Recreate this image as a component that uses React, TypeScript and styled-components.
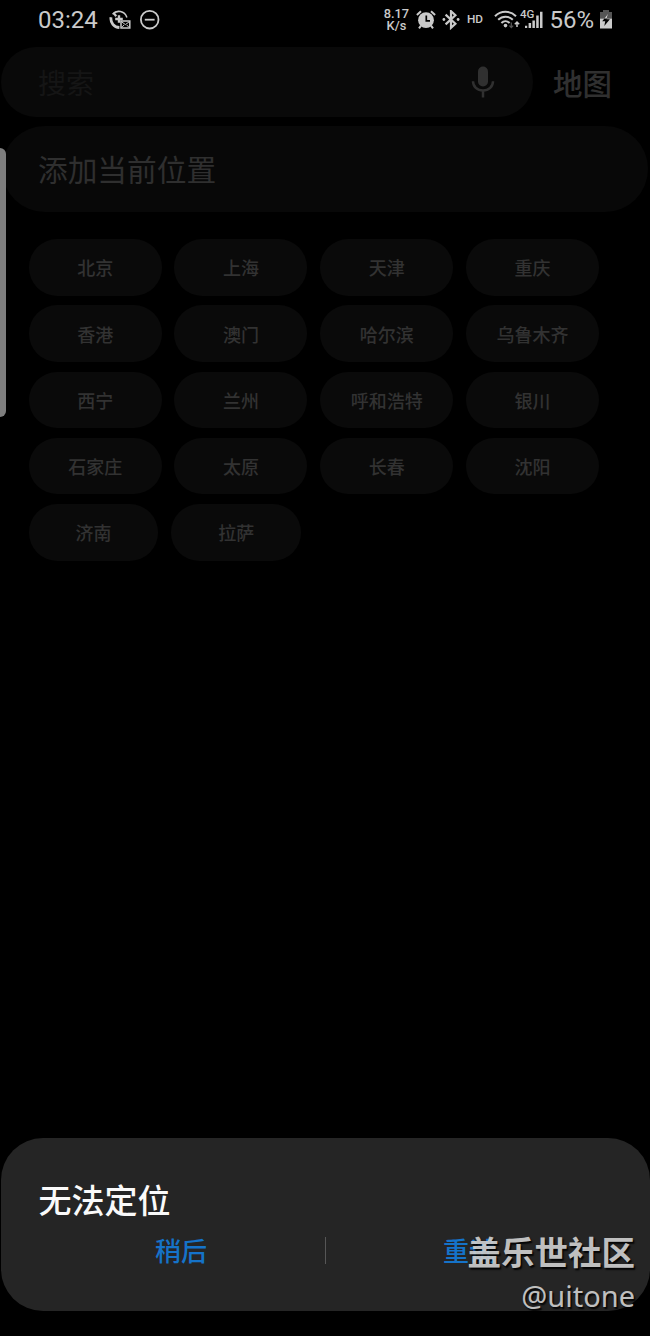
import React from "react";
import styled, { createGlobalStyle } from "styled-components";

const cjk = `"Noto Sans CJK SC", sans-serif`;

const GlobalStyle = createGlobalStyle`
  * { box-sizing: border-box; }
  body { margin: 0; background: #000; }
  button { border: 0; padding: 0; background: none; font: inherit; color: inherit; }
`;

const Screen = styled.div`
  position: relative;
  display: flex;
  flex-direction: column;
  width: 650px;
  height: 1336px;
  overflow: hidden;
  background: #000;
  color: #303030;
  font-family: Roboto, ${cjk};
`;

const StatusBar = styled.header`
  display: flex;
  justify-content: space-between;
  height: 47px;
  padding: 0 37px 0 38px;
  color: #cacaca;
`;

const StatusGroup = styled.div`
  display: flex;
  align-items: center;
  height: 39px;
`;

const StatusText = styled.span<{ $left?: number }>`
  margin-left: ${(p) => p.$left ?? 0}px;
  font-size: 24px;
  line-height: 1;
  white-space: nowrap;
`;

const Speed = styled.div`
  display: flex;
  flex-direction: column;
  align-items: center;
  width: 26px;
  font-size: 12.8px;
  font-weight: 500;
  line-height: 12px;
`;

const Icon = styled.svg<{ $left?: number }>`
  display: block;
  flex: none;
  margin-left: ${(p) => p.$left ?? 0}px;
`;

const HdLabel = styled.span`
  width: 17px;
  margin-left: 7px;
  font-size: 11.8px;
  font-weight: 500;
  line-height: 1;
`;

const SearchRow = styled.div`
  display: flex;
  align-items: center;
  height: 70px;
  padding-left: 1px;
`;

const SearchField = styled.div`
  display: flex;
  align-items: center;
  justify-content: space-between;
  width: 532px;
  height: 70px;
  padding: 0 37px 0 37px;
  border-radius: 35px;
  background: #090909;
`;

const Placeholder = styled.span`
  color: #151515;
  font: 400 28px/40px ${cjk};
`;

const MapButton = styled.button`
  margin-left: 20px;
  font: 500 29.5px/40px ${cjk};
`;

const AddLocation = styled.div`
  display: flex;
  align-items: center;
  height: 86px;
  margin: 9px 2px 0 2px;
  padding: 0 0 0 36px;
  border-radius: 43px;
  background: #080808;
  color: #2f2f2f;
  font: 400 29.7px/44px ${cjk};
`;

const Cities = styled.div`
  display: flex;
  flex-direction: column;
  gap: 9.75px;
  margin: 27px 0 0 28.7px;
`;

const CityRow = styled.div`
  display: flex;
  gap: 12.8px;
`;

const City = styled.button<{ $width: number }>`
  width: ${(p) => p.$width}px;
  height: 56.5px;
  border-radius: 28.25px;
  background: #0a0a0a;
  color: #323232;
  font: 500 18px/26px ${cjk};
`;

const EdgeHandle = styled.div`
  position: absolute;
  left: -6px;
  top: 147.5px;
  width: 12px;
  height: 269px;
  border-radius: 6px;
  background: #7e7e7e;
`;

const Dialog = styled.section`
  height: 173.5px;
  margin: auto 0.5px 25px;
  padding: 37px 0 0;
  border-radius: 42px;
  background: #252525;
`;

const DialogTitle = styled.h1`
  margin: 0 0 0 38px;
  color: #fafafa;
  font: 500 33px/48px ${cjk};
`;

const DialogActions = styled.div`
  display: flex;
  align-items: center;
  justify-content: center;
  height: 55px;
`;

const DialogButton = styled.button`
  width: 287px;
  color: #1573c9;
  font: 500 26px/40px ${cjk};
`;

const Divider = styled.span`
  width: 1px;
  height: 27px;
  background: #565656;
`;

const Watermark = styled.div`
  position: absolute;
  right: 15px;
  top: 1229px;
  display: flex;
  flex-direction: column;
  align-items: flex-end;
  color: #d0d0d0;
  opacity: 0.9;
  text-shadow: 1.5px 1.5px 1.5px #000;
`;

const Community = styled.strong`
  font: 700 33.5px/44px ${cjk};
`;

const Author = styled.span`
  font: 400 29px/46px "Noto Sans", sans-serif;
`;

const rows = [
  { width: 133, names: ["北京", "上海", "天津", "重庆"] },
  { width: 133, names: ["香港", "澳门", "哈尔滨", "乌鲁木齐"] },
  { width: 133, names: ["西宁", "兰州", "呼和浩特", "银川"] },
  { width: 133, names: ["石家庄", "太原", "长春", "沈阳"] },
  { width: 129.8, names: ["济南", "拉萨"] },
];

const DataSaverIcon = () => (
  <Icon $left={11} width="22" height="20" viewBox="0 0 22 20" fill="none" stroke="currentColor">
    <path d="M3.6 4.2C7.6-.4 15.6.7 17.9 7.4" strokeWidth="1.5" />
    <path d="M4.4 2.6l2.8 3.6" strokeWidth="2.2" />
    <path d="M2 7.2c-.8 5.4 3 10 8.4 10.3" strokeWidth="2.8" />
    <path d="M10 5.2v7.6M6.2 9h7.6" strokeWidth="2.4" />
    <path d="M12 10.9h8.8v7.2H12z" fill="#000" strokeWidth="1.5" />
    <path d="M12.6 11.8l3.8 2.8 3.8-2.8M12.8 17.4l2.2-2.4M20 17.4L17.8 15" strokeWidth="1" />
  </Icon>
);

const DoNotDisturbIcon = () => (
  <Icon $left={9} width="20" height="20" viewBox="0 0 20 20" fill="none" stroke="currentColor" strokeWidth="1.8">
    <circle cx="9.7" cy="9.7" r="8.8" />
    <path d="M4.8 9.7h9.8" />
  </Icon>
);

const AlarmIcon = () => (
  <Icon $left={6.5} width="20" height="20" viewBox="0 0 20 20">
    <circle cx="10" cy="10.2" r="7.9" fill="currentColor" />
    <path d="M.9 5L5 1.2M19.1 5L15 1.2M5 15.6l-2 2.8M15 15.6l2 2.8" stroke="currentColor" strokeWidth="2" />
    <path d="M10.3 5.4v5.4H14" fill="none" stroke="#000" strokeWidth="1.7" />
  </Icon>
);

const BluetoothIcon = () => (
  <Icon $left={6} width="18" height="20" viewBox="0 0 18 20">
    <path d="M3.6 4.6l9.8 9.2L9 17.8V1.2l4.4 4-9.8 9.2" fill="none" stroke="currentColor" strokeWidth="2.2" />
    <circle cx="1.9" cy="9.5" r="1.4" fill="currentColor" />
    <circle cx="16.1" cy="9.5" r="1.4" fill="currentColor" />
  </Icon>
);

const WifiIcon = () => (
  <Icon $left={10} width="26" height="20" viewBox="0 0 26 20" fill="none" stroke="currentColor" strokeWidth="2">
    <path d="M1 6.2c5.8-6 15.2-6 21 0M4.2 9.8c4.1-4.2 10.5-4.2 14.6 0M7.4 13c2.4-2.4 5.8-2.4 8.2 0" />
    <circle cx="11.5" cy="15.6" r="1.8" fill="currentColor" stroke="none" />
    <path d="M17.3 12.5v5M15.4 15.6l1.9 2 1.9-2" stroke="#555" strokeWidth="1.3" />
    <path d="M23 17v-5M20.8 14.2l2.2-2.2 2.2 2.2" strokeWidth="1.5" />
  </Icon>
);

const Network = styled.div`
  position: relative;
  width: 23px;
  height: 20px;
`;

const NetworkType = styled.span`
  position: absolute;
  left: 0;
  top: -1px;
  font-size: 11.5px;
  font-weight: 500;
  line-height: 11px;
`;

const SignalIcon = () => (
  <Icon width="23" height="20" viewBox="0 0 23 20" fill="currentColor">
    <path d="M5 15.8h2.2V18H5zM8.6 13h2.5v5H8.6zM12.4 10.5h2.5V18h-2.5zM16.2 5.5h2.5V18h-2.5zM20 1.7h2.5V18H20z" />
  </Icon>
);

const BatteryIcon = () => (
  <Icon $left={5} width="14" height="20" viewBox="0 0 14 20">
    <path d="M4 0h6v2h3v6.5H1V2h3z" fill="#555" />
    <path d="M1 8.5h12v10H1z" fill="currentColor" />
    <path d="M8.7 4.5L3.2 11.3h3L5.3 16l5.6-6.8H7.6z" fill="#000" />
    <path d="M9 4L5.4 8.5h2.2z" fill="#ddd" />
  </Icon>
);

const MicIcon = () => (
  <Icon width="26" height="34" viewBox="0 0 26 34" color="#303030">
    <rect x="8" y="1.5" width="10" height="20" rx="5" fill="currentColor" />
    <path d="M3 16.2c0 5.2 4.2 9.3 10 9.3s10-4.1 10-9.3M13 25.5v7" fill="none" stroke="currentColor" strokeWidth="2.5" />
  </Icon>
);

export default function App() {
  return (
    <>
      <GlobalStyle />
      <Screen>
        <StatusBar>
          <StatusGroup>
            <StatusText>03:24</StatusText>
            <DataSaverIcon />
            <DoNotDisturbIcon />
          </StatusGroup>
          <StatusGroup>
            <Speed>
              <span>8.17</span>
              <span>K/s</span>
            </Speed>
            <AlarmIcon />
            <BluetoothIcon />
            <HdLabel>HD</HdLabel>
            <WifiIcon />
            <Network>
              <NetworkType>4G</NetworkType>
              <SignalIcon />
            </Network>
            <StatusText $left={6.5}>56%</StatusText>
            <BatteryIcon />
          </StatusGroup>
        </StatusBar>
        <SearchRow>
          <SearchField>
            <Placeholder>搜索</Placeholder>
            <MicIcon />
          </SearchField>
          <MapButton>地图</MapButton>
        </SearchRow>
        <AddLocation>添加当前位置</AddLocation>
        <Cities>
          {rows.map((row) => (
            <CityRow key={row.names[0]}>
              {row.names.map((name) => (
                <City key={name} $width={row.width}>{name}</City>
              ))}
            </CityRow>
          ))}
        </Cities>
        <EdgeHandle />
        <Dialog>
          <DialogTitle>无法定位</DialogTitle>
          <DialogActions>
            <DialogButton>稍后</DialogButton>
            <Divider />
            <DialogButton>重试</DialogButton>
          </DialogActions>
        </Dialog>
        <Watermark>
          <Community>盖乐世社区</Community>
          <Author>@uitone</Author>
        </Watermark>
      </Screen>
    </>
  );
}
